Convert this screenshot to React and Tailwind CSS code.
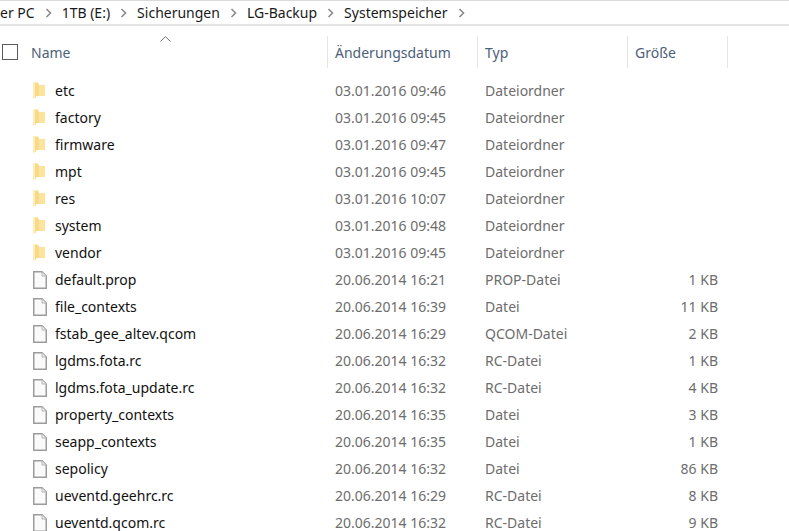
import React from 'react';

const folders = [
  ['etc', '03.01.2016 09:46'],
  ['factory', '03.01.2016 09:45'],
  ['firmware', '03.01.2016 09:47'],
  ['mpt', '03.01.2016 09:45'],
  ['res', '03.01.2016 10:07'],
  ['system', '03.01.2016 09:48'],
  ['vendor', '03.01.2016 09:45'],
];

const files = [
  ['default.prop', '20.06.2014 16:21', 'PROP-Datei', '1 KB'],
  ['file_contexts', '20.06.2014 16:39', 'Datei', '11 KB'],
  ['fstab_gee_altev.qcom', '20.06.2014 16:29', 'QCOM-Datei', '2 KB'],
  ['lgdms.fota.rc', '20.06.2014 16:32', 'RC-Datei', '1 KB'],
  ['lgdms.fota_update.rc', '20.06.2014 16:32', 'RC-Datei', '4 KB'],
  ['property_contexts', '20.06.2014 16:35', 'Datei', '3 KB'],
  ['seapp_contexts', '20.06.2014 16:35', 'Datei', '1 KB'],
  ['sepolicy', '20.06.2014 16:32', 'Datei', '86 KB'],
  ['ueventd.geehrc.rc', '20.06.2014 16:29', 'RC-Datei', '8 KB'],
  ['ueventd.qcom.rc', '20.06.2014 16:32', 'RC-Datei', '9 KB'],
];

const crumbs = ['er PC', '1TB (E:)', 'Sicherungen', 'LG-Backup', 'Systemspeicher'];

const Chevron = () => (
  <svg width="7" height="10" viewBox="0 0 7 10" className="mx-[10px] shrink-0">
    <path d="M1.5 1 L5.5 5 L1.5 9" fill="none" stroke="#8a8a8a" strokeWidth="1.6" />
  </svg>
);

const FolderIcon = () => (
  <svg width="12" height="17" viewBox="0 0 12 17" className="shrink-0">
    <path d="M0 0 H5 L6 3 H12 V14 H3 V16 L0 17 Z" fill="#fdeeba" />
    <path d="M2 1 H5 L6 3 V14 H3 V15.5 L2 16 Z" fill="#f7d98a" />
    <path d="M6 3 H12 V14 H6 Z" fill="#fde49c" />
  </svg>
);

const FileIcon = () => (
  <svg width="14" height="18" viewBox="0 0 14 18" className="shrink-0">
    <path d="M0.75 0.75 H9 L13.25 5 V17.25 H0.75 Z" fill="#fafafa" stroke="#9c9c9c" strokeWidth="1.5" />
    <path d="M9 1 V5 H13" fill="#eeeeee" stroke="#b4b4b4" />
  </svg>
);

const Row = ({ icon, name, date, type, size }) => (
  <div className="flex h-[27px] items-center">
    <div className="flex w-[327px] items-center pl-[33px]">
      <div className="flex w-[22px] shrink-0">{icon}</div>
      <span className="text-[#111111]">{name}</span>
    </div>
    <div className="w-[150px] pl-[8px] text-[#6d6d6d]">{date}</div>
    <div className="w-[150px] pl-[8px] text-[#6d6d6d]">{type}</div>
    <div className="w-[91px] text-right text-[#6d6d6d]">{size}</div>
  </div>
);

const HeaderCell = ({ label, className }) => (
  <div className={`flex h-[32px] items-center border-r border-[#e5e5e5] pl-[7px] pt-[1px] text-[#4c607a] ${className}`}>
    {label}
  </div>
);

export default function App() {
  return (
    <div
      className="relative h-[531px] w-[789px] overflow-hidden bg-white text-[14px] leading-none"
      style={{ fontFamily: '"Noto Sans", "Open Sans", sans-serif' }}
    >
      <div className="flex h-[26px] items-center border-t border-b-2 border-t-[#dadada] border-b-[#e3e3e3] text-[#1a1a1a]">
        {crumbs.map((crumb) => (
          <React.Fragment key={crumb}>
            <span>{crumb}</span>
            <Chevron />
          </React.Fragment>
        ))}
      </div>

      <div className="mt-[10px] flex items-center">
        <div className="ml-[2px] h-[16px] w-[16px] shrink-0 border border-[#5a5a5a]" />
        <div className="flex h-[32px] w-[310px] items-center border-r border-[#e5e5e5] pl-[13px] pt-[1px] text-[#4c607a]">Name</div>
        <HeaderCell label="Änderungsdatum" className="w-[150px]" />
        <HeaderCell label="Typ" className="w-[150px]" />
        <HeaderCell label="Größe" className="w-[100px]" />
      </div>

      {/* Sortierpfeil liegt über der Kopfzeile */}
      <svg width="11" height="6" viewBox="0 0 11 6" className="absolute left-[160px] top-[36px]">
        <path d="M0.5 5.5 L5.5 0.7 L10.5 5.5" fill="none" stroke="#6f6f6f" />
      </svg>

      <div className="mt-[9px]">
        {folders.map(([name, date]) => (
          <Row key={name} icon={<FolderIcon />} name={name} date={date} type="Dateiordner" size="" />
        ))}
        {files.map(([name, date, type, size]) => (
          <Row key={name} icon={<FileIcon />} name={name} date={date} type={type} size={size} />
        ))}
      </div>
    </div>
  );
}
